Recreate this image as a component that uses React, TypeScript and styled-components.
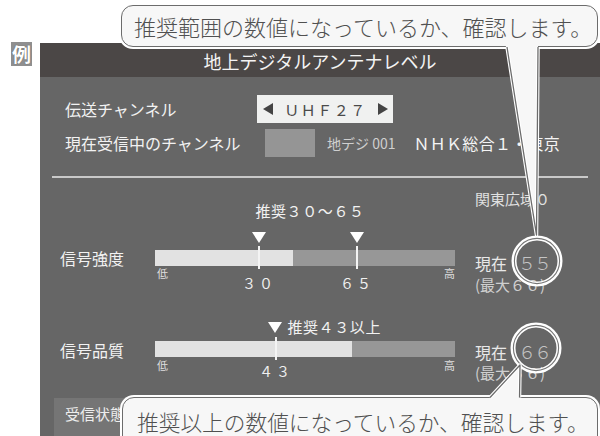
import React from "react";
import styled, { createGlobalStyle } from "styled-components";

const Global = createGlobalStyle`
  html, body { margin: 0; padding: 0; background: #ffffff; }
  body {
    width: 600px; height: 436px; overflow: hidden;
    font-family: "Noto Sans CJK JP", "Noto Sans", sans-serif;
  }
  * { box-sizing: border-box; }
`;

const Page = styled.div`
  position: relative;
  width: 600px;
  height: 436px;
  display: flex;
  overflow: hidden;
  background: #ffffff;
`;

const Gutter = styled.div`
  width: 40px;
  flex: none;
  padding: 42px 0 0 11px;
`;

const ExampleBadge = styled.div`
  width: 21px;
  height: 24px;
  background: #8f8f8f;
  color: #ffffff;
  font-size: 19px;
  font-weight: 700;
  line-height: 24px;
  text-align: center;
  text-shadow: 0 0 1px #555;
`;

const Screen = styled.div`
  flex: 1;
  min-width: 0;
  margin-top: 43px;
  display: flex;
  flex-direction: column;
`;

const TitleBar = styled.div`
  height: 34px;
  flex: none;
  background: #4b4746;
  color: #f4f4f4;
  font-size: 18px;
  display: flex;
  align-items: center;
  justify-content: center;
  padding-top: 2px;
`;

const Body = styled.div`
  flex: 1;
  background: #666666;
  padding: 18px 12px 0;
  display: flex;
  flex-direction: column;
  overflow: hidden;
`;

const ChannelRow = styled.div`
  display: flex;
  align-items: center;
  height: 28px;
  padding-left: 13px;
  & + & { margin-top: 6px; }
`;

const RowLabel = styled.div<{ $w: number }>`
  width: ${(p) => p.$w}px;
  flex: none;
  font-size: 16px;
  color: #f2f2f2;
  white-space: nowrap;
`;

const Selector = styled.div`
  width: 136px;
  height: 28px;
  background: #f0f1f0;
  display: flex;
  align-items: center;
  padding: 0 5px 0 6px;
  color: #4a4a4a;
  font-size: 15px;
  letter-spacing: 1.5px;
`;

const Arrow = styled.span<{ $dir: "left" | "right" }>`
  width: 0;
  height: 0;
  flex: none;
  border-top: 6.5px solid transparent;
  border-bottom: 6.5px solid transparent;
  ${(p) =>
    p.$dir === "left"
      ? "border-right: 10px solid #444;"
      : "border-left: 10px solid #444;"}
`;

const SelectorText = styled.span`
  flex: 1;
  text-align: center;
`;

const Swatch = styled.div`
  width: 50px;
  height: 28px;
  flex: none;
  background: #959595;
`;

const SubInfo = styled.span`
  margin-left: 12px;
  font-size: 14px;
  color: #cfcfcf;
  white-space: nowrap;
`;

const Station = styled.span`
  margin-left: 18px;
  font-size: 16px;
  color: #f4f4f4;
  letter-spacing: 0.3px;
  white-space: nowrap;
`;

const Divider = styled.div`
  height: 2px;
  background: #c9c9c9;
  margin-top: 19px;
  flex: none;
`;

const Meter = styled.div<{ $top: number }>`
  display: flex;
  padding-top: ${(p) => p.$top}px;
  flex: none;
`;

const MeterLabel = styled.div<{ $top: number }>`
  width: 103px;
  flex: none;
  padding: ${(p) => p.$top}px 0 0 8px;
  font-size: 16px;
  line-height: 20px;
  color: #f2f2f2;
`;

const BarColumn = styled.div`
  width: 300px;
  flex: none;
  display: flex;
  flex-direction: column;
`;

const Caption = styled.div<{ $top: number }>`
  height: 20px;
  margin-top: ${(p) => p.$top}px;
  font-size: 15px;
  line-height: 20px;
  color: #f2f2f2;
  letter-spacing: 0.6px;
  display: flex;
  align-items: center;
`;

const CenteredCaption = styled(Caption)`
  justify-content: center;
  padding-left: 10px;
`;

const MarkerRow = styled.div`
  position: relative;
  height: 29px;
`;

const Pointer = styled.span`
  display: block;
  width: 0;
  height: 0;
  border-left: 7.5px solid transparent;
  border-right: 7.5px solid transparent;
  border-top: 11px solid #ffffff;
`;

const MarkerPin = styled.span`
  position: absolute;
  top: 11px;
  transform: translateX(-50%);
`;

const CaptionPointer = styled(Pointer)`
  margin-right: 5px;
  flex: none;
`;

const Track = styled.div<{ $top: number }>`
  position: relative;
  height: 16px;
  margin-top: ${(p) => p.$top}px;
  background: #979797;
`;

const Fill = styled.div`
  height: 100%;
  background: #e2e2e2;
`;

const Tick = styled.span`
  position: absolute;
  top: -4px;
  bottom: -3px;
  width: 2px;
  margin-left: -1px;
  background: #f4f4f4;
`;

const Scale = styled.div`
  position: relative;
  height: 26px;
`;

const EndLabels = styled.div<{ $top: number }>`
  display: flex;
  justify-content: space-between;
  padding: ${(p) => p.$top}px 0 0 2px;
  font-size: 11px;
  line-height: 12px;
  color: #dedede;
`;

const ScaleNumber = styled.span<{ $top: number }>`
  position: absolute;
  top: ${(p) => p.$top}px;
  transform: translateX(-50%);
  font-size: 14px;
  line-height: 16px;
  letter-spacing: 3px;
  color: #f0f0f0;
  white-space: nowrap;
`;

const RightColumn = styled.div`
  flex: 1;
  padding-left: 20px;
  display: flex;
  flex-direction: column;
`;

const RightLine = styled.div<{ $top: number; $size: number; $color: string }>`
  margin-top: ${(p) => p.$top}px;
  height: 20px;
  line-height: 20px;
  font-size: ${(p) => p.$size}px;
  color: ${(p) => p.$color};
  white-space: nowrap;
`;

const Reading = styled.span`
  margin-left: 11px;
  font-size: 18px;
  letter-spacing: -2px;
  font-weight: 300;
  color: #c4c4c4;
`;

const StatusBox = styled.div`
  margin: 15px -2px 0 2px;
  flex: 1;
  background: #757575;
  padding: 6px 11px;
  font-size: 15px;
  line-height: 20px;
  color: #eeeeee;
`;

const Callout = styled.div<{ $x: number; $y: number; $w: number; $h: number; $pad: number; $indent: number; $size: number }>`
  position: absolute;
  left: ${(p) => p.$x}px;
  top: ${(p) => p.$y}px;
  width: ${(p) => p.$w}px;
  height: ${(p) => p.$h}px;
  padding: ${(p) => p.$pad}px 0 0 ${(p) => p.$indent}px;
  background: #f7f7f7;
  border: 1.3px solid #6c6c6c;
  border-radius: 12px;
  box-shadow: 0 0 0 2px #ffffff;
  color: #505050;
  font-size: ${(p) => p.$size}px;
  font-weight: 300;
  line-height: 28px;
  white-space: nowrap;
  z-index: 1;
`;

const Annotations = styled.svg`
  position: absolute;
  left: 0;
  top: 0;
  z-index: 2;
  pointer-events: none;
`;

type Marker = { pos: number; label: string };

const strength = { fill: 0.46, markers: [{ pos: 0.347, label: "３０" }, { pos: 0.673, label: "６５" }] as Marker[] };
const quality = { fill: 0.657, markers: [{ pos: 0.403, label: "４３" }] as Marker[] };

const pct = (v: number) => `${v * 100}%`;

function Tail({ pts, fillPts }: { pts: string; fillPts: string }) {
  return (
    <g>
      <polygon points={fillPts} fill="#f7f7f7" />
      <polyline points={pts} fill="none" stroke="#ffffff" strokeWidth={3.5} strokeLinejoin="round" />
      <polyline points={pts} fill="none" stroke="#6c6c6c" strokeWidth={1.3} strokeLinejoin="round" />
    </g>
  );
}

function Ring({ cx, cy }: { cx: number; cy: number }) {
  return (
    <g>
      <circle cx={cx} cy={cy} r={23} fill="none" stroke="#ffffff" strokeWidth={5} />
      <circle cx={cx} cy={cy} r={22.6} fill="none" stroke="#767676" strokeWidth={1.1} />
    </g>
  );
}

export default function App() {
  return (
    <>
      <Global />
      <Page>
        <Gutter>
          <ExampleBadge>例</ExampleBadge>
        </Gutter>
        <Screen>
          <TitleBar>地上デジタルアンテナレベル</TitleBar>
          <Body>
            <ChannelRow>
              <RowLabel $w={192}>伝送チャンネル</RowLabel>
              <Selector>
                <Arrow $dir="left" />
                <SelectorText>ＵＨＦ２７</SelectorText>
                <Arrow $dir="right" />
              </Selector>
            </ChannelRow>
            <ChannelRow>
              <RowLabel $w={200}>現在受信中のチャンネル</RowLabel>
              <Swatch />
              <SubInfo>地デジ 001</SubInfo>
              <Station>ＮＨＫ総合１・東京</Station>
            </ChannelRow>
            <Divider />

            <Meter $top={11}>
              <MeterLabel $top={59}>信号強度</MeterLabel>
              <BarColumn>
                <CenteredCaption $top={12}>推奨３０～６５</CenteredCaption>
                <MarkerRow>
                  {strength.markers.map((m) => (
                    <MarkerPin key={m.label} style={{ left: pct(m.pos) }}>
                      <Pointer />
                    </MarkerPin>
                  ))}
                </MarkerRow>
                <Track $top={0}>
                  <Fill style={{ width: pct(strength.fill) }} />
                  {strength.markers.map((m) => (
                    <Tick key={m.label} style={{ left: pct(m.pos) }} />
                  ))}
                </Track>
                <Scale>
                  <EndLabels $top={1}>
                    <span>低</span>
                    <span>高</span>
                  </EndLabels>
                  {strength.markers.map((m) => (
                    <ScaleNumber key={m.label} $top={9} style={{ left: pct(m.pos) }}>
                      {m.label}
                    </ScaleNumber>
                  ))}
                </Scale>
              </BarColumn>
              <RightColumn>
                <RightLine $top={0} $size={15} $color="#e0e0e0">関東広域０</RightLine>
                <RightLine $top={43} $size={16} $color="#e8e8e8">
                  現在<Reading>５５</Reading>
                </RightLine>
                <RightLine $top={3} $size={15} $color="#cfcfcf">(最大６６)</RightLine>
              </RightColumn>
            </Meter>

            <Meter $top={0}>
              <MeterLabel $top={45}>信号品質</MeterLabel>
              <BarColumn>
                <Caption $top={22} style={{ paddingLeft: `${quality.markers[0].pos * 300 - 7.5}px` }}>
                  <CaptionPointer />
                  推奨４３以上
                </Caption>
                <Track $top={4}>
                  <Fill style={{ width: pct(quality.fill) }} />
                  {quality.markers.map((m) => (
                    <Tick key={m.label} style={{ left: pct(m.pos) }} />
                  ))}
                </Track>
                <Scale>
                  <EndLabels $top={2}>
                    <span>低</span>
                    <span>高</span>
                  </EndLabels>
                  {quality.markers.map((m) => (
                    <ScaleNumber key={m.label} $top={6} style={{ left: pct(m.pos) }}>
                      {m.label}
                    </ScaleNumber>
                  ))}
                </Scale>
              </BarColumn>
              <RightColumn>
                <RightLine $top={46} $size={16} $color="#e8e8e8">
                  現在<Reading>６６</Reading>
                </RightLine>
                <RightLine $top={2} $size={15} $color="#cfcfcf">(最大６６)</RightLine>
              </RightColumn>
            </Meter>

            <StatusBox>受信状態</StatusBox>
          </Body>
        </Screen>

        <Callout $x={121} $y={5} $w={477} $h={42} $pad={6} $indent={12} $size={22}>
          推奨範囲の数値になっているか、確認します。
        </Callout>
        <Callout $x={122} $y={397} $w={476} $h={52} $pad={10} $indent={14} $size={21.7}>
          推奨以上の数値になっているか、確認します。
        </Callout>

        <Annotations width={600} height={436} viewBox="0 0 600 436">
          <Ring cx={537} cy={261} />
          <Ring cx={536} cy={348} />
          <Tail pts="507,47 536.5,235 538,47" fillPts="505.5,44 536.5,235 538,44" />
          <Tail pts="490,397.5 520,365 519.5,397.5" fillPts="488,400 520,365 519.5,400" />
        </Annotations>
      </Page>
    </>
  );
}
